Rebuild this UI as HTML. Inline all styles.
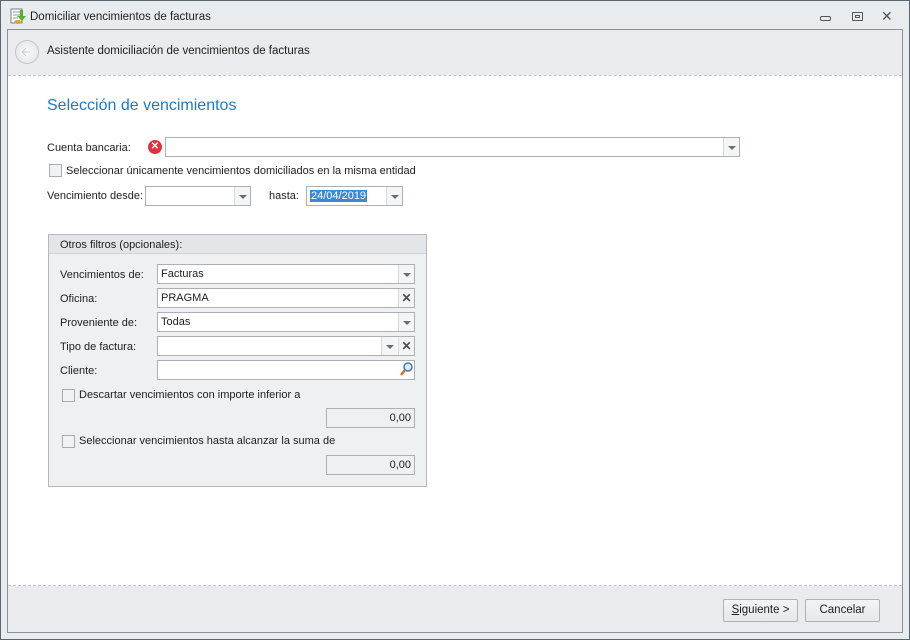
<!DOCTYPE html>
<html><head><meta charset="utf-8"><style>
*{margin:0;padding:0;box-sizing:border-box}
body{width:910px;height:640px;background:#e9ecef;font-family:"Liberation Sans",sans-serif;font-size:11px;color:#1e1e1e;position:relative;overflow:hidden}
.a{position:absolute}
.win{left:0;top:0;width:910px;height:640px;border:1px solid #5d6570}
.frame{left:7px;top:29px;width:896px;height:604px;border:1px solid #8e9297;background:#e9ebee}
.white{left:8px;top:75px;width:894px;height:511px;background:#fff;border-top:1px dashed #c4c6c9;border-bottom:1px dashed #c4c6c9}
.inp{position:absolute;background:#fff;border:1px solid #acb0b5;height:20px;padding:0 3px;line-height:18px;white-space:nowrap}
.dd{position:absolute;top:0;right:0;width:16px;height:18px;border-left:1px solid #d6d8db;background:#f4f5f6}
.dd:after{content:"";position:absolute;left:4px;top:8px;border-left:4px solid transparent;border-right:4px solid transparent;border-top:4px solid #6a6d72}
.xb{position:absolute;top:0;right:0;width:16px;height:18px;border-left:1px solid #d6d8db;background:#f4f5f6;text-align:center;font-weight:bold;color:#4a4d52;font-size:12px;line-height:18px}
.cb{position:absolute;width:13px;height:13px;border:1px solid #a9acb0;background:#f1f2f3}
.grp{left:48px;top:234px;width:379px;height:253px;border:1px solid #b5b8bc;background:#eef0f2}
.btn{position:absolute;height:23px;border:1px solid #aeb1b5;border-radius:2px;background:linear-gradient(#f3f4f5,#e6e8ea);text-align:center;line-height:21px;font-size:11.5px}
</style></head><body>
<div class="a win"></div>
<svg class="a" style="left:10px;top:8px" width="16" height="17"><rect x="1" y="1" width="11" height="14" fill="#fff" stroke="#7b7f86"/><line x1="3" y1="4" x2="10" y2="4" stroke="#999"/><line x1="3" y1="7" x2="10" y2="7" stroke="#999"/><line x1="3" y1="10" x2="8" y2="10" stroke="#999"/><path d="M10 2v6h-3l5 5 4-5h-3V2z" fill="#5bb02b"/><ellipse cx="8" cy="14" rx="4" ry="2" fill="#d9a43a"/></svg>
<div class="a" style="left:30px;top:11px;font-size:11.5px">Domiciliar vencimientos de facturas</div>
<div class="a" style="left:820px;top:16px;width:11px;height:5px;border:1px solid #555;border-radius:2px"></div>
<div class="a" style="left:852px;top:12px;width:11px;height:9px;border:1px solid #555;border-radius:1px"><div style="margin:2px 2px;width:5px;height:3px;border:1px solid #555"></div></div>
<div class="a" style="left:881px;top:8px;font-size:14px;color:#555">✕</div>
<div class="a frame"></div>
<div class="a" style="left:15px;top:40px;width:24px;height:24px;border-radius:50%;border:1px solid #c3c6ca;background:radial-gradient(#fafbfc,#dfe2e6)"><svg width="22" height="22"><path d="M14 11H7M10 7l-4 4 4 4" stroke="#fff" stroke-width="3" fill="none"/><path d="M14 11H7M10 7l-4 4 4 4" stroke="#c5c9ce" stroke-width="1" fill="none"/></svg></div>
<div class="a" style="left:47px;top:45px;font-size:11.5px">Asistente domiciliación de vencimientos de facturas</div>
<div class="a white"></div>
<div class="a" style="left:47px;top:97px;font-size:16px;color:#1e7ac4">Selección de vencimientos</div>
<div class="a" style="left:47px;top:142px">Cuenta bancaria:</div>
<div class="a" style="left:148px;top:140px;width:14px;height:14px;border-radius:50%;background:#e0313f;color:#fff;font-size:10px;font-weight:bold;text-align:center;line-height:14px">✕</div>
<div class="inp" style="left:165px;top:137px;width:575px"><div class="dd"></div></div>
<div class="cb" style="left:49px;top:164px"></div>
<div class="a" style="left:66px;top:165px">Seleccionar únicamente vencimientos domiciliados en la misma entidad</div>
<div class="a" style="left:47px;top:190px">Vencimiento desde:</div>
<div class="inp" style="left:145px;top:186px;width:106px"><div class="dd"></div></div>
<div class="a" style="left:269px;top:190px">hasta:</div>
<div class="inp" style="left:306px;top:186px;width:97px"><span style="background:#3a8ad8;color:#fff;padding:0 1px">24/04/2019</span><div class="dd"></div></div>
<div class="a grp"></div>
<div class="a" style="left:49px;top:235px;width:377px;height:19px;background:#e3e5e8;border-bottom:1px solid #cfd2d6"></div>
<div class="a" style="left:60px;top:239px">Otros filtros (opcionales):</div>
<div class="a" style="left:60px;top:269px">Vencimientos de:</div>
<div class="inp" style="left:157px;top:264px;width:258px">Facturas<div class="dd"></div></div>
<div class="a" style="left:60px;top:293px">Oficina:</div>
<div class="inp" style="left:157px;top:288px;width:258px">PRAGMA<div class="xb">✕</div></div>
<div class="a" style="left:60px;top:317px">Proveniente de:</div>
<div class="inp" style="left:157px;top:312px;width:258px">Todas<div class="dd"></div></div>
<div class="a" style="left:60px;top:341px">Tipo de factura:</div>
<div class="inp" style="left:157px;top:336px;width:258px"><div class="dd" style="right:17px"></div><div class="xb">✕</div></div>
<div class="a" style="left:60px;top:365px">Cliente:</div>
<div class="inp" style="left:157px;top:360px;width:258px"><div class="xb" style="background:#fff;border:0"><svg width="14" height="16"><circle cx="9" cy="6" r="4" fill="#d6ecfa" stroke="#4a79a8" stroke-width="1.5"/><line x1="6" y1="9" x2="2" y2="14" stroke="#c8782a" stroke-width="2.5"/></svg></div></div>
<div class="cb" style="left:62px;top:389px"></div>
<div class="a" style="left:79px;top:389px">Descartar vencimientos con importe inferior a</div>
<div class="inp" style="left:326px;top:408px;width:89px;background:#eef0f2;text-align:right">0,00</div>
<div class="cb" style="left:62px;top:435px"></div>
<div class="a" style="left:79px;top:435px">Seleccionar vencimientos hasta alcanzar la suma de</div>
<div class="inp" style="left:326px;top:455px;width:89px;background:#eef0f2;text-align:right">0,00</div>
<div class="btn" style="left:723px;top:599px;width:75px"><u>S</u>iguiente &gt;</div>
<div class="btn" style="left:805px;top:599px;width:75px">Cancelar</div>
</body></html>
